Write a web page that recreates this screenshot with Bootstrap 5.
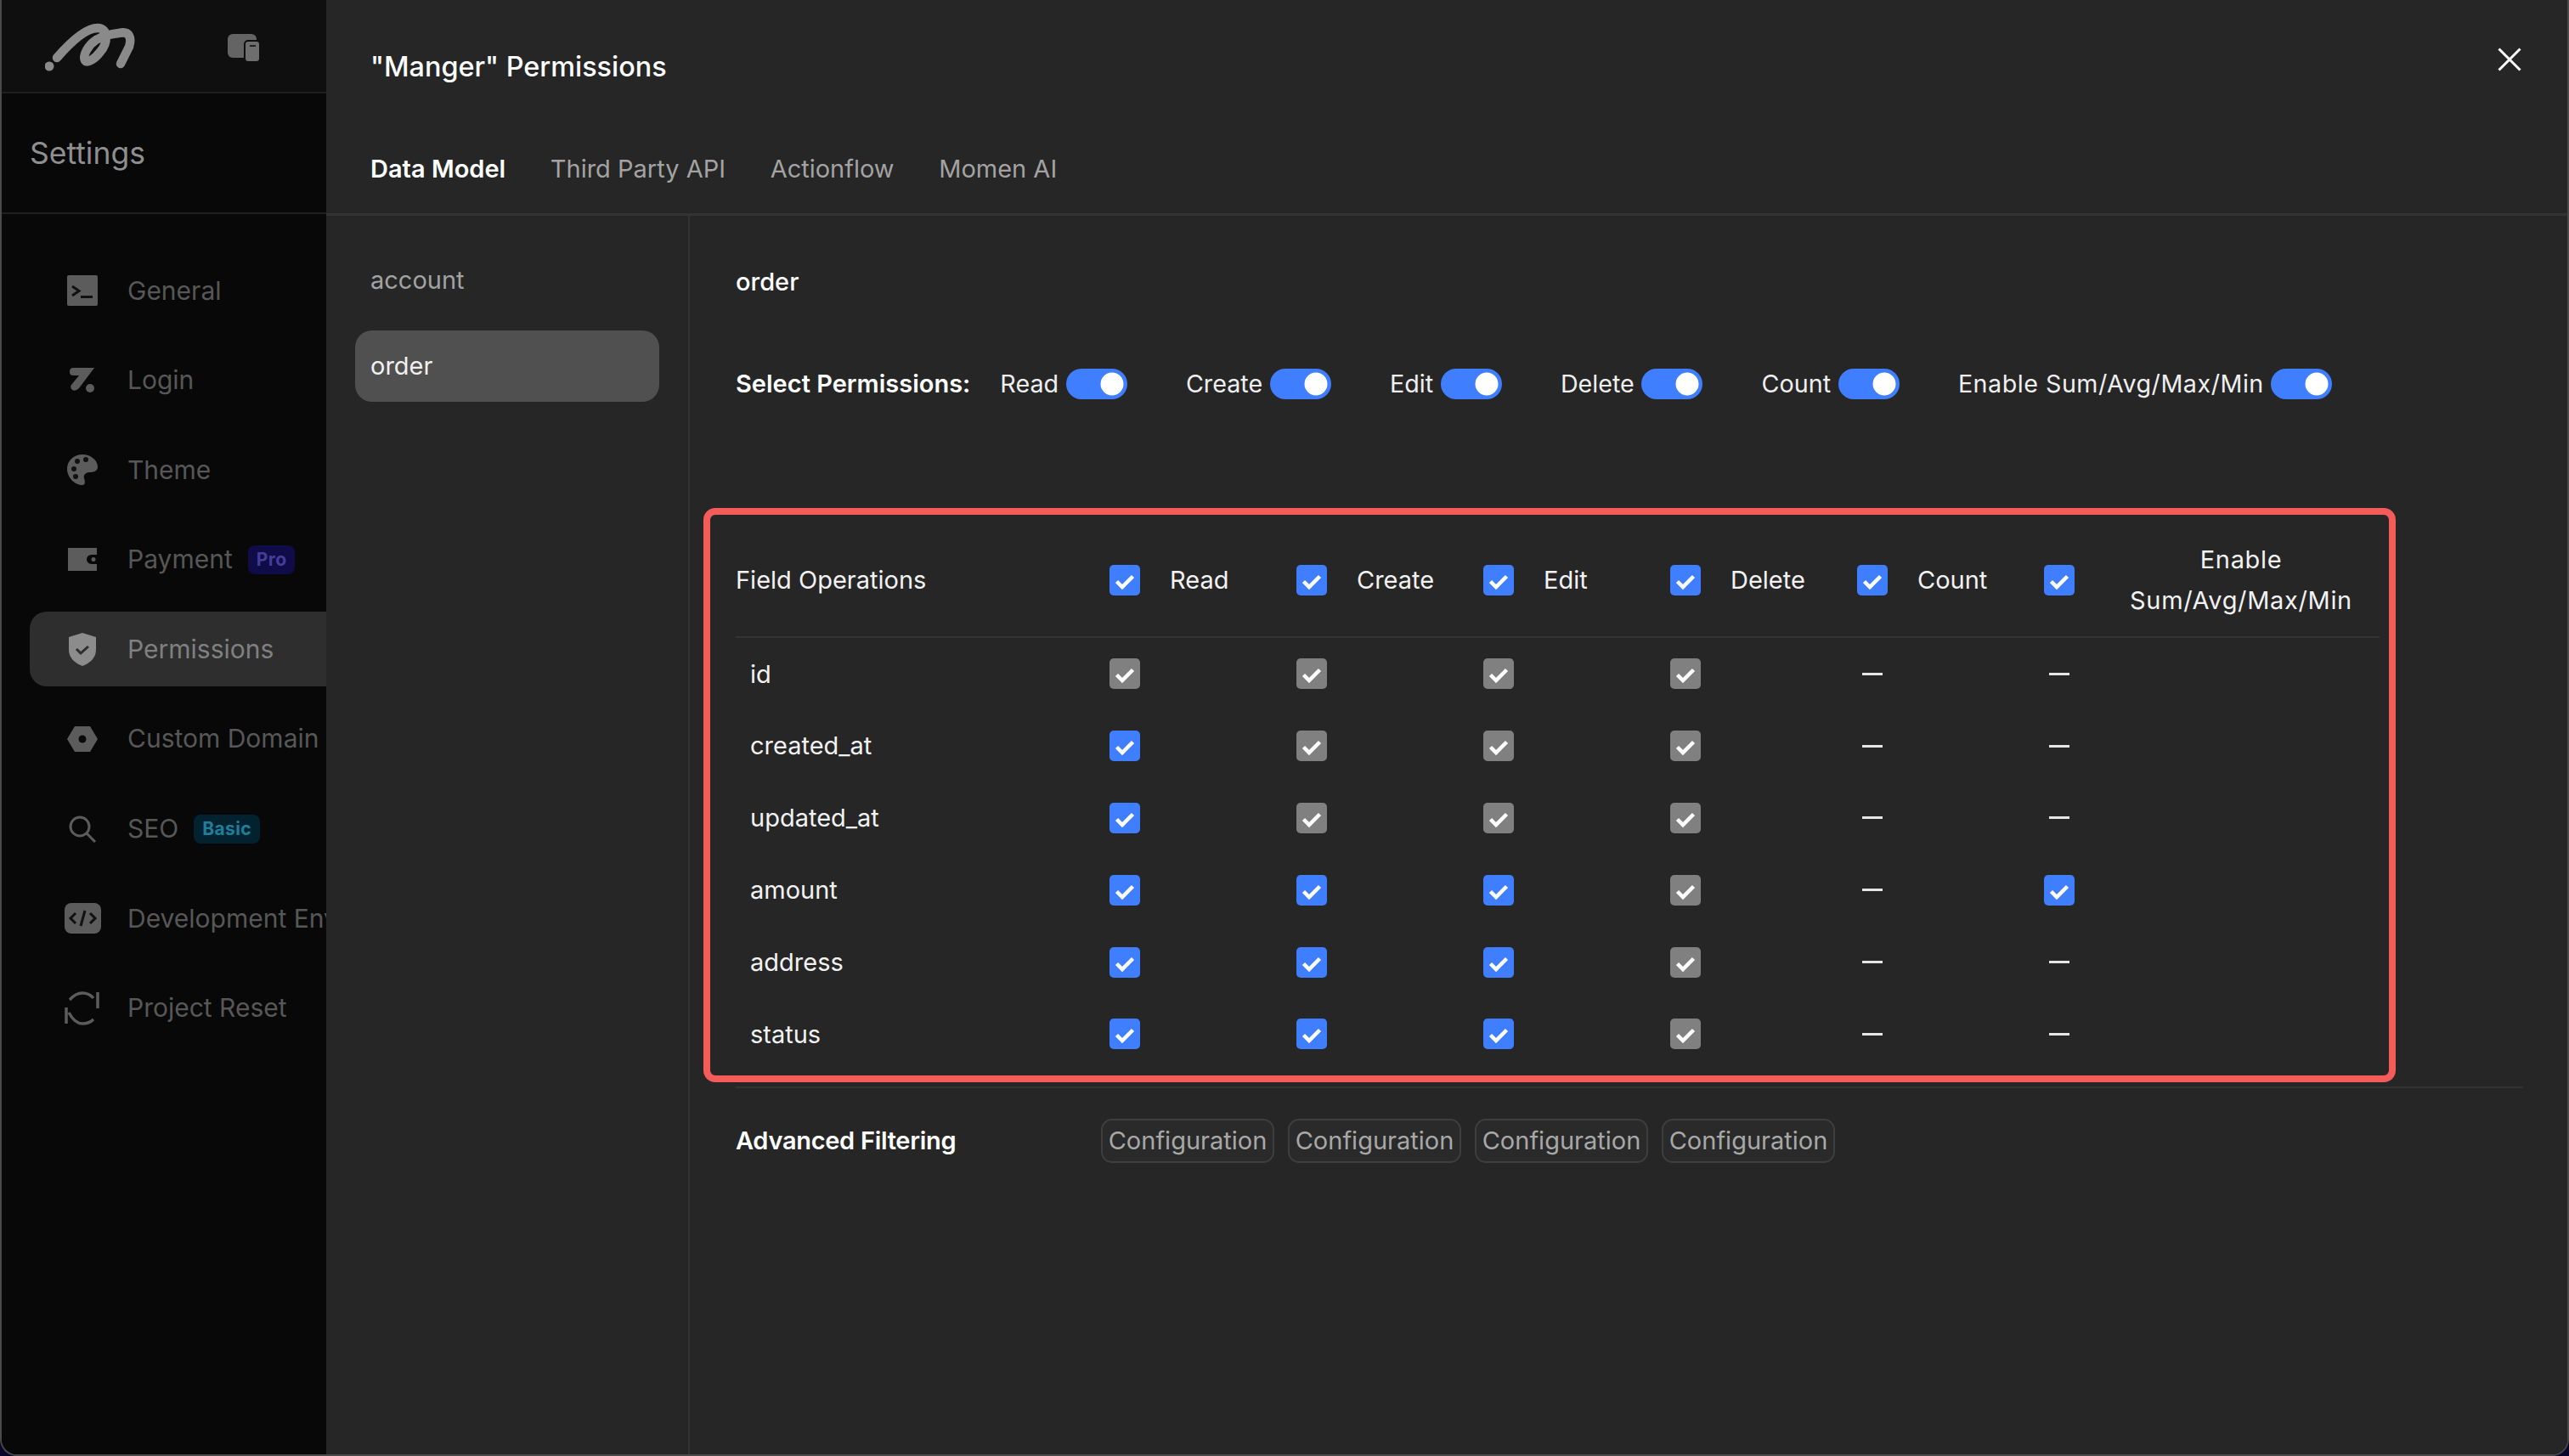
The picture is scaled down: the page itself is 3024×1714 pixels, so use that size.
<!DOCTYPE html>
<html lang="en">
<head>
<meta charset="utf-8">
<title>Permissions</title>
<link href="https://cdn.jsdelivr.net/npm/bootstrap@5.3.0/dist/css/bootstrap.min.css" rel="stylesheet">
<style>
html, body { margin: 0; background: #08062a; }
body { font-family: Inter, "Noto Sans", sans-serif; font-size: 29px; color: #f2f2f2; }
.app-frame { width: 3024px; height: 1714px; overflow: hidden; border: 2px solid #4a4a4a; border-top: 0; border-radius: 0 0 20px 20px; }
.side-pane { width: 382px; background: #080808; overflow: hidden; }
.side-top { height: 110px; background: #0f0f0f; border-bottom: 2px solid #1f1f1f; padding-left: 51px; }
.switcher-ico { margin: 5px 78px 0 auto; }
.side-title { height: 142px; border-bottom: 2px solid #1f1f1f; padding-left: 33px; padding-top: 2px; font-size: 35.500px; color: #8f8f8f; }
.side-nav { padding-top: 46px; padding-left: 33px; }
.nav-row { height: 88px; margin-bottom: 17.6px; width: 420px; white-space: nowrap; font-size: 30px; color: #575757; border-radius: 20px 0 0 20px; }
.nav-row.is-on { background: #2e2e2e; color: #808080; }
.nav-ico { width: 115px; flex: 0 0 115px; display: flex; justify-content: center; padding-left: 9px; }
.tier { font-size: 21px; font-weight: 700; height: 34px; line-height: 34px; padding: 0 10px; border-radius: 8px; margin-left: 18px; letter-spacing: .4px; }
.tier-pro { background: #0f0c48; color: #443e9a; }
.tier-basic { background: #03222f; color: #1e7f9c; }
.main-pane { background: #262626; min-width: 0; }
.main-head { height: 254px; border-bottom: 3px solid #333; padding-left: 52px; position: relative; }
.main-title { padding-top: 55px; height: 179px; font-size: 32.400px; font-weight: 500; color: #fff; line-height: 48px; }
.tab-row { gap: 52.600px; line-height: 40px; font-size: 29px; color: #a3a3a3; }
.tab-row .is-on { color: #fff; font-weight: 600; }
.close-x { position: absolute; right: 54px; top: 56px; }
.list-pane { width: 428px; border-right: 2px solid #333; padding: 0 34px; flex: 0 0 428px; }
.list-row { height: 84px; padding-left: 18px; border-radius: 20px; color: #a3a3a3; }
.list-row.is-on { background: #505050; color: #f0f0f0; margin-top: 17px; }
.list-row.first { margin-top: 34px; }
.detail-pane { padding-left: 54px; min-width: 0; }
.detail-name { height: 122px; padding-top: 58px; line-height: 40px; font-weight: 500; color: #fff; font-size: 29px; }
.select-row { height: 72px; margin-top: 40px; }
.select-row b { font-weight: 600; color: #fff; margin-right: 35px; }
.sw-item { margin-right: 69.300px; gap: 8.500px; color: #efefef; font-size: 28.700px; }
.form-check.form-switch.sw-box { padding: 0; margin: 0; min-height: 0; display: flex; }
.form-switch .form-check-input.sw-in { width: 72px; height: 36px; margin: 0; background-color: #3f7eff; border: 0; float: none; }
.perm-wrap { margin: 110px 0 0 -38px; width: 1992px; height: 676px; border: 8px solid #f35c58; border-radius: 14px; padding: 10px 11px 0 30px; }
.perm-row { display: grid; grid-template-columns: 440px repeat(5, 220px) 395px; align-items: center; height: 84.800px; }
.perm-row.perm-head { height: 135px; border-bottom: 2px solid #333; }
.perm-name { padding-left: 17px; }
.perm-cell { display: flex; align-items: center; gap: 35px; }
.form-check-input.tick { width: 36px; height: 36px; margin: 0; float: none; border: 0; border-radius: 5px; background-color: #3f7eff; background-size: 100% 100%; background-image: url("data:image/svg+xml,%3csvg xmlns='http://www.w3.org/2000/svg' viewBox='0 0 36 36'%3e%3cpath fill='none' stroke='%23fff' stroke-width='4.500' d='M8.500 19.500l6.500 6.500 12.500-12.500'/%3e%3c/svg%3e"); }
.form-check-input.tick:disabled { background-color: #808080; opacity: 1; }
.en-label { width: 322px; text-align: center; line-height: 48px; letter-spacing: .65px; }
.sw-wide { letter-spacing: .5px; }
.no-tick { display: block; width: 24px; height: 3px; margin-left: 6px; background: #e6e6e6; }
.rule-line { border-top: 2px solid #333; margin-top: 5px; margin-right: 52px; }
.adv-row { display: grid; grid-template-columns: 430px repeat(4, 220px); align-items: center; margin-top: 36px; }
.adv-row b { font-weight: 600; color: #fff; letter-spacing: -.3px; }
.conf-btn { width: 204px; height: 52px; padding: 0; border: 2px solid #3e3e3e; border-radius: 13px; background: #2a2a2a; color: #a8a8a8; font-size: 29px; line-height: 48px; }
</style>
</head>
<body>
<div class="app-frame d-flex">
  <aside class="side-pane flex-shrink-0">
    <div class="side-top d-flex align-items-center">
      <svg width="110" height="62" viewBox="53 22 110 62" aria-hidden="true">
        <circle cx="58" cy="77" r="5.500" fill="#8a8a8a"/>
        <path d="M67 67C80 52 100 32 115 32C128 32 127 50 118 60C112 68 103 74 100 70C97 64 104 52 113 46C120 42 130 39 140 38C153 35 155 44 152 54L142 74" fill="none" stroke="#8a8a8a" stroke-width="10.500" stroke-linecap="round" stroke-linejoin="round"/>
      </svg>
      <svg class="switcher-ico" width="38" height="33" viewBox="0 0 38 33" aria-hidden="true">
        <rect width="34" height="28" rx="6" fill="#646464"/>
        <rect x="20" y="8" width="18" height="25" rx="4" fill="#6e6e6e" stroke="#0f0f0f" stroke-width="2"/>
        <rect x="26" y="13" width="7" height="2" fill="#222"/>
      </svg>
    </div>
    <div class="side-title d-flex align-items-center">Settings</div>
    <nav class="side-nav">
      <div class="nav-row d-flex align-items-center">
        <span class="nav-ico"><svg width="36" height="36" viewBox="0 0 36 36"><rect width="36" height="36" rx="2" fill="#5c5c5c"/><path d="M6 13l8 5.500-8 5.500" fill="none" stroke="#111" stroke-width="3"/><rect x="16" y="24" width="14" height="3" fill="#111"/></svg></span>General
      </div>
      <div class="nav-row d-flex align-items-center">
        <span class="nav-ico"><svg width="30" height="30" viewBox="0 0 30 30"><path d="M4 0H29L11 24Q7 28 3 26Q0 23 2 20L11 9H4Q0 9 0 4.500Q0 0 4 0Z" fill="#5c5c5c"/><circle cx="24" cy="24" r="5" fill="#5c5c5c"/></svg></span>Login
      </div>
      <div class="nav-row d-flex align-items-center">
        <span class="nav-ico"><svg width="36" height="36" viewBox="0 0 36 36"><path d="M18 0C7 0 0 8 0 17C0 26 8 36 18 36C22 36 21 31 20 28C19 24 22 21 26 21C30 21 36 20 36 15C36 6 27 0 18 0Z" fill="#5c5c5c"/><circle cx="8" cy="17" r="3" fill="#111"/><circle cx="12" cy="8" r="3" fill="#111"/><circle cx="22" cy="6" r="3" fill="#111"/><circle cx="10" cy="26" r="3" fill="#111"/></svg></span>Theme
      </div>
      <div class="nav-row d-flex align-items-center">
        <span class="nav-ico"><svg width="34" height="27" viewBox="0 0 34 27"><path d="M0 0H34V8H28C24 8 22 11 22 13.500C22 16 24 19 28 19H34V27H0Z" fill="#5c5c5c"/><circle cx="30" cy="13.500" r="2.500" fill="#5c5c5c"/></svg></span>Payment<span class="tier tier-pro">Pro</span>
      </div>
      <div class="nav-row is-on d-flex align-items-center">
        <span class="nav-ico"><svg width="32" height="39" viewBox="0 0 32 39"><path d="M16 0L32 5V20C32 30 24 36 16 39C8 36 0 30 0 20V5Z" fill="#8c8c8c"/><path d="M9 19l5 5 9-8" fill="none" stroke="#2e2e2e" stroke-width="3"/></svg></span>Permissions
      </div>
      <div class="nav-row d-flex align-items-center">
        <span class="nav-ico"><svg width="36" height="30" viewBox="0 0 36 30"><path d="M9 0H27L36 15L27 30H9L0 15Z" fill="#5c5c5c"/><circle cx="18" cy="15" r="4.500" fill="#0a0a0a"/></svg></span>Custom Domain
      </div>
      <div class="nav-row d-flex align-items-center">
        <span class="nav-ico"><svg width="32" height="32" viewBox="0 0 32 32"><circle cx="13" cy="13" r="11" fill="none" stroke="#5c5c5c" stroke-width="3"/><path d="M21 21L31 31" stroke="#5c5c5c" stroke-width="3"/></svg></span>SEO<span class="tier tier-basic">Basic</span>
      </div>
      <div class="nav-row d-flex align-items-center">
        <span class="nav-ico"><svg width="43" height="36" viewBox="0 0 43 36"><rect width="43" height="36" rx="8" fill="#5c5c5c"/><path d="M13 12l-6 6 6 6M30 12l6 6-6 6" fill="none" stroke="#111" stroke-width="3"/><path d="M24 9l-5 18" stroke="#111" stroke-width="3"/></svg></span>Development Environment
      </div>
      <div class="nav-row d-flex align-items-center">
        <span class="nav-ico"><svg width="42" height="42" viewBox="0 0 42 42"><path d="M6 11Q13 3 21 3Q29 3 34 9M39 2V21M5 26Q12 39 21 39Q29 39 34 34M2 20V39" fill="none" stroke="#5c5c5c" stroke-width="3.500"/></svg></span>Project Reset
      </div>
    </nav>
  </aside>
  <main class="main-pane flex-grow-1 d-flex flex-column">
    <header class="main-head flex-shrink-0">
      <div class="main-title">"Manger" Permissions</div>
      <div class="tab-row d-flex">
        <span class="is-on">Data Model</span><span>Third Party API</span><span>Actionflow</span><span>Momen AI</span>
      </div>
      <svg class="close-x" width="28" height="28" viewBox="0 0 28 28"><path d="M1.500 1.500L26.500 26.500M26.500 1.500L1.500 26.500" stroke="#fff" stroke-width="3"/></svg>
    </header>
    <div class="d-flex flex-grow-1">
      <div class="list-pane">
        <div class="list-row first d-flex align-items-center">account</div>
        <div class="list-row is-on d-flex align-items-center">order</div>
      </div>
      <div class="detail-pane flex-grow-1">
        <div class="detail-name">order</div>
        <div class="select-row d-flex align-items-center">
          <b>Select Permissions:</b>
          <div class="sw-item d-flex align-items-center">Read<div class="form-check form-switch sw-box"><input class="form-check-input sw-in" type="checkbox" checked aria-label="Read"></div></div>
          <div class="sw-item d-flex align-items-center">Create<div class="form-check form-switch sw-box"><input class="form-check-input sw-in" type="checkbox" checked aria-label="Create"></div></div>
          <div class="sw-item d-flex align-items-center">Edit<div class="form-check form-switch sw-box"><input class="form-check-input sw-in" type="checkbox" checked aria-label="Edit"></div></div>
          <div class="sw-item d-flex align-items-center">Delete<div class="form-check form-switch sw-box"><input class="form-check-input sw-in" type="checkbox" checked aria-label="Delete"></div></div>
          <div class="sw-item d-flex align-items-center">Count<div class="form-check form-switch sw-box"><input class="form-check-input sw-in" type="checkbox" checked aria-label="Count"></div></div>
          <div class="sw-item d-flex align-items-center"><span class="sw-wide">Enable Sum/Avg/Max/Min</span><div class="form-check form-switch sw-box"><input class="form-check-input sw-in" type="checkbox" checked aria-label="Enable"></div></div>
        </div>
        <div class="perm-wrap">
          <div class="perm-row perm-head">
            <span>Field Operations</span>
            <span class="perm-cell"><input class="form-check-input tick" type="checkbox" checked aria-label="Read">Read</span>
            <span class="perm-cell"><input class="form-check-input tick" type="checkbox" checked aria-label="Create">Create</span>
            <span class="perm-cell"><input class="form-check-input tick" type="checkbox" checked aria-label="Edit">Edit</span>
            <span class="perm-cell"><input class="form-check-input tick" type="checkbox" checked aria-label="Delete">Delete</span>
            <span class="perm-cell"><input class="form-check-input tick" type="checkbox" checked aria-label="Count">Count</span>
            <span class="perm-cell"><input class="form-check-input tick" type="checkbox" checked aria-label="Enable"><span class="en-label">Enable Sum/Avg/Max/Min</span></span>
          </div>
          <div class="perm-row"><span class="perm-name">id</span>
            <span class="perm-cell"><input class="form-check-input tick" type="checkbox" checked disabled aria-label="Read"></span><span class="perm-cell"><input class="form-check-input tick" type="checkbox" checked disabled aria-label="Create"></span><span class="perm-cell"><input class="form-check-input tick" type="checkbox" checked disabled aria-label="Edit"></span><span class="perm-cell"><input class="form-check-input tick" type="checkbox" checked disabled aria-label="Delete"></span><span class="perm-cell"><i class="no-tick"></i></span><span class="perm-cell"><i class="no-tick"></i></span></div>
          <div class="perm-row"><span class="perm-name">created_at</span>
            <span class="perm-cell"><input class="form-check-input tick" type="checkbox" checked aria-label="Read"></span><span class="perm-cell"><input class="form-check-input tick" type="checkbox" checked disabled aria-label="Create"></span><span class="perm-cell"><input class="form-check-input tick" type="checkbox" checked disabled aria-label="Edit"></span><span class="perm-cell"><input class="form-check-input tick" type="checkbox" checked disabled aria-label="Delete"></span><span class="perm-cell"><i class="no-tick"></i></span><span class="perm-cell"><i class="no-tick"></i></span></div>
          <div class="perm-row"><span class="perm-name">updated_at</span>
            <span class="perm-cell"><input class="form-check-input tick" type="checkbox" checked aria-label="Read"></span><span class="perm-cell"><input class="form-check-input tick" type="checkbox" checked disabled aria-label="Create"></span><span class="perm-cell"><input class="form-check-input tick" type="checkbox" checked disabled aria-label="Edit"></span><span class="perm-cell"><input class="form-check-input tick" type="checkbox" checked disabled aria-label="Delete"></span><span class="perm-cell"><i class="no-tick"></i></span><span class="perm-cell"><i class="no-tick"></i></span></div>
          <div class="perm-row"><span class="perm-name">amount</span>
            <span class="perm-cell"><input class="form-check-input tick" type="checkbox" checked aria-label="Read"></span><span class="perm-cell"><input class="form-check-input tick" type="checkbox" checked aria-label="Create"></span><span class="perm-cell"><input class="form-check-input tick" type="checkbox" checked aria-label="Edit"></span><span class="perm-cell"><input class="form-check-input tick" type="checkbox" checked disabled aria-label="Delete"></span><span class="perm-cell"><i class="no-tick"></i></span><span class="perm-cell"><input class="form-check-input tick" type="checkbox" checked aria-label="Enable"></span></div>
          <div class="perm-row"><span class="perm-name">address</span>
            <span class="perm-cell"><input class="form-check-input tick" type="checkbox" checked aria-label="Read"></span><span class="perm-cell"><input class="form-check-input tick" type="checkbox" checked aria-label="Create"></span><span class="perm-cell"><input class="form-check-input tick" type="checkbox" checked aria-label="Edit"></span><span class="perm-cell"><input class="form-check-input tick" type="checkbox" checked disabled aria-label="Delete"></span><span class="perm-cell"><i class="no-tick"></i></span><span class="perm-cell"><i class="no-tick"></i></span></div>
          <div class="perm-row"><span class="perm-name">status</span>
            <span class="perm-cell"><input class="form-check-input tick" type="checkbox" checked aria-label="Read"></span><span class="perm-cell"><input class="form-check-input tick" type="checkbox" checked aria-label="Create"></span><span class="perm-cell"><input class="form-check-input tick" type="checkbox" checked aria-label="Edit"></span><span class="perm-cell"><input class="form-check-input tick" type="checkbox" checked disabled aria-label="Delete"></span><span class="perm-cell"><i class="no-tick"></i></span><span class="perm-cell"><i class="no-tick"></i></span></div>
        </div>
        <div class="rule-line"></div>
        <div class="adv-row">
          <b>Advanced Filtering</b>
          <span><button class="conf-btn" type="button">Configuration</button></span>
          <span><button class="conf-btn" type="button">Configuration</button></span>
          <span><button class="conf-btn" type="button">Configuration</button></span>
          <span><button class="conf-btn" type="button">Configuration</button></span>
        </div>
      </div>
    </div>
  </main>
</div>
<script src="https://cdn.jsdelivr.net/npm/bootstrap@5.3.0/dist/js/bootstrap.bundle.min.js"></script>
</body>
</html>
